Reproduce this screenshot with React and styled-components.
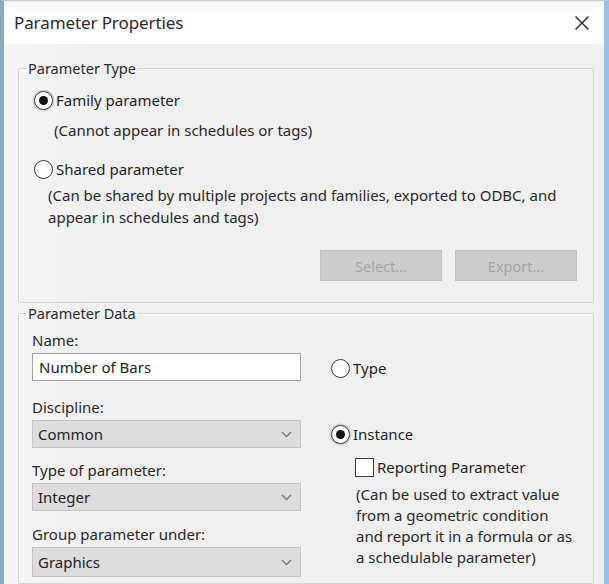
import React from "react";
import styled, { createGlobalStyle } from "styled-components";

const Global = createGlobalStyle`
  html, body { margin: 0; padding: 0; background: #f0f0f0; }
  body { font-family: "Noto Sans", "Open Sans", sans-serif; }
  * { box-sizing: border-box; }
`;

const Window = styled.div`
  width: 609px;
  height: 584px;
  overflow: hidden;
  display: flex;
  flex-direction: column;
  background: #f0f0f0;
  border-left: 4px solid #8ea9c6;
  border-right: 5px solid #9cc0e4;
  border-top: 1px solid #c9ced4;
  color: #1f1f1f;
  font-size: 15px;
`;

const TitleBar = styled.div`
  height: 43px;
  flex: none;
  display: flex;
  align-items: center;
  justify-content: space-between;
  padding: 0 14px 0 10px;
  background: linear-gradient(#f4f4f4, #ffffff 35%, #ffffff);
`;

const Title = styled.div`
  font-size: 17px;
  color: #2a2a2a;
  letter-spacing: -0.1px;
`;

const Close = styled.svg`
  width: 16px;
  height: 16px;
`;

const Body = styled.div`
  flex: 1;
  display: flex;
  flex-direction: column;
  padding: 14px 10px 0 14px;
  background: linear-gradient(90deg, #f6f6f6, #f0f0f0 15%);
`;

const Group = styled.fieldset`
  margin: 0;
  padding: ${(p) => p.$pad};
  min-inline-size: 0;
  border: 1px solid #d6d6d6;
  box-shadow: inset 1px 1px 0 #fafafa;
  border-radius: 2px;
  flex: ${(p) => (p.$grow ? 1 : "none")};
`;

const Legend = styled.legend`
  padding: 0 2px;
  margin-left: ${(p) => p.$ml}px;
  line-height: 20px;
  font-size: 14.5px;
  color: #2a2a2a;
`;

const RadioRow = styled.label`
  display: flex;
  align-items: center;
  gap: 3px;
  height: 22px;
  margin-top: ${(p) => p.$mt || 0}px;
  margin-left: ${(p) => p.$ml || 0}px;
`;

const Radio = styled.span`
  width: 19px;
  height: 19px;
  flex: none;
  border-radius: 50%;
  border: 1.5px solid #3a3a3a;
  background: #fff;
  display: flex;
  align-items: center;
  justify-content: center;
  box-shadow: ${(p) => (p.$on ? "0 0 0 1.5px #d0d0d0" : "none")};
  &::after {
    content: "";
    width: 9px;
    height: 9px;
    border-radius: 50%;
    background: ${(p) => (p.$on ? "#111" : "transparent")};
  }
`;

const Check = styled.span`
  width: 19px;
  height: 19px;
  flex: none;
  border: 1.5px solid #3a3a3a;
  background: #fff;
`;

const Note = styled.div`
  line-height: ${(p) => p.$lh || 22}px;
  margin-top: ${(p) => p.$mt || 0}px;
  margin-left: ${(p) => p.$ml || 0}px;
  color: #2a2a2a;
`;

const Buttons = styled.div`
  display: flex;
  justify-content: flex-end;
  gap: 13px;
  margin-top: 22px;
  padding-right: 1px;
`;

const Button = styled.button`
  width: 122px;
  height: 31px;
  border: 1px solid #c2c2c2;
  background: #cccccc;
  color: #a4a4a4;
  font-family: inherit;
  font-size: 14.5px;
  padding: 0;
`;

const Columns = styled.div`
  display: flex;
  gap: 30px;
`;

const LeftCol = styled.div`
  width: 269px;
  display: flex;
  flex-direction: column;
`;

const Field = styled.div`
  display: flex;
  flex-direction: column;
  gap: 3px;
  margin-top: ${(p) => p.$mt || 0}px;
`;

const Label = styled.div`
  line-height: 20px;
  color: #2a2a2a;
`;

const Input = styled.div`
  height: 28px;
  border: 1.5px solid #a4a4a4;
  background: #fff;
  display: flex;
  align-items: center;
  padding-left: 6px;
  color: #222;
`;

const Select = styled.div`
  height: ${(p) => p.$h || 28}px;
  border: 1px solid #c3c3c3;
  background: #dddddd;
  display: flex;
  align-items: center;
  justify-content: space-between;
  padding: 0 8px 0 5px;
  color: #222;
`;

const Chevron = styled.svg`
  width: 11px;
  height: 7px;
`;

const RightCol = styled.div`
  display: flex;
  flex-direction: column;
  padding-top: 27px;
`;

const CheckRow = styled.div`
  display: flex;
  align-items: center;
  gap: 3px;
  height: 20px;
  margin-top: 12px;
  margin-left: 24px;
`;

const Chev = () => (
  <Chevron viewBox="0 0 11 7">
    <path d="M1 1 L5.5 5.5 L10 1" fill="none" stroke="#777" strokeWidth="1.3" />
  </Chevron>
);

export default function App() {
  return (
    <>
      <Global />
      <Window>
        <TitleBar>
          <Title>Parameter Properties</Title>
          <Close viewBox="0 0 16 16">
            <path d="M1.5 1.5 L14.5 14.5 M14.5 1.5 L1.5 14.5" stroke="#333" strokeWidth="1.6" />
          </Close>
        </TitleBar>
        <Body>
          <Group $pad="11px 15px 21px 15px">
            <Legend $ml={-8}>Parameter Type</Legend>
            <RadioRow>
              <Radio $on />
              Family parameter
            </RadioRow>
            <Note $mt={8} $ml={20}>(Cannot appear in schedules or tags)</Note>
            <RadioRow $mt={17}>
              <Radio />
              Shared parameter
            </RadioRow>
            <Note $mt={4} $ml={14}>
              (Can be shared by multiple projects and families, exported to ODBC, and
              <br />
              appear in schedules and tags)
            </Note>
            <Buttons>
              <Button>Select...</Button>
              <Button>Export...</Button>
            </Buttons>
          </Group>
          <Group $grow $pad="7px 15px 0 13px">
            <Legend $ml={-6}>Parameter Data</Legend>
            <Columns>
              <LeftCol>
                <Field>
                  <Label>Name:</Label>
                  <Input>Number of Bars</Input>
                </Field>
                <Field $mt={16}>
                  <Label>Discipline:</Label>
                  <Select>
                    Common
                    <Chev />
                  </Select>
                </Field>
                <Field $mt={12}>
                  <Label>Type of parameter:</Label>
                  <Select>
                    Integer
                    <Chev />
                  </Select>
                </Field>
                <Field $mt={13}>
                  <Label>Group parameter under:</Label>
                  <Select $h={30}>
                    Graphics
                    <Chev />
                  </Select>
                </Field>
              </LeftCol>
              <RightCol>
                <RadioRow>
                  <Radio />
                  Type
                </RadioRow>
                <RadioRow $mt={44}>
                  <Radio $on />
                  Instance
                </RadioRow>
                <CheckRow>
                  <Check />
                  Reporting Parameter
                </CheckRow>
                <Note $lh={21} $mt={7} $ml={25}>
                  (Can be used to extract value
                  <br />
                  from a geometric condition
                  <br />
                  and report it in a formula or as
                  <br />
                  a schedulable parameter)
                </Note>
              </RightCol>
            </Columns>
          </Group>
        </Body>
      </Window>
    </>
  );
}
